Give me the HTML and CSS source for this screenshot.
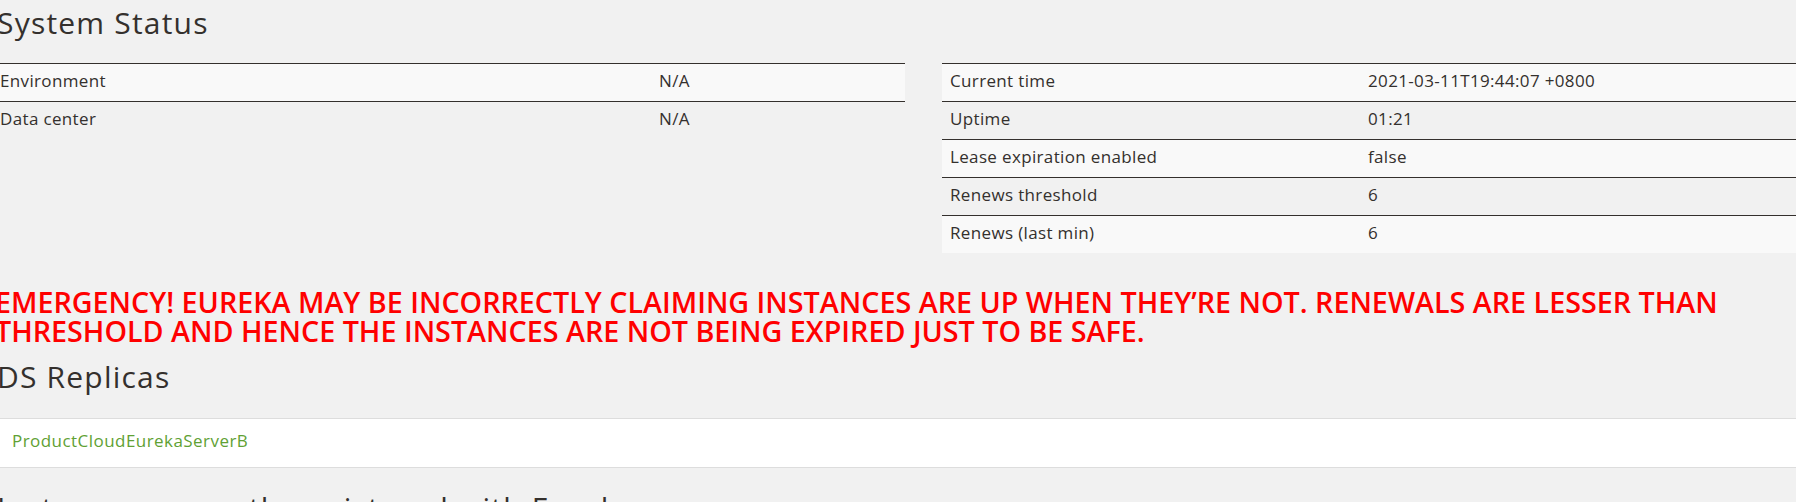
FILE: index.html
```html
<!DOCTYPE html>
<html>
<head>
<meta charset="utf-8">
<title>Eureka</title>
<link rel="stylesheet" href="styles.css">
</head>
<body>
<div class="page">
  <h1 class="title first">System Status</h1>
  <div class="status-row">
    <table class="status left">
      <tr><td class="key">Environment</td><td>N/A</td></tr>
      <tr><td class="key">Data center</td><td>N/A</td></tr>
    </table>
    <table class="status right">
      <tr><td class="key">Current time</td><td>2021-03-11T19:44:07 +0800</td></tr>
      <tr><td class="key">Uptime</td><td>01:21</td></tr>
      <tr><td class="key">Lease expiration enabled</td><td>false</td></tr>
      <tr><td class="key">Renews threshold</td><td>6</td></tr>
      <tr><td class="key">Renews (last min)</td><td>6</td></tr>
    </table>
  </div>
  <h4 class="emergency">EMERGENCY! EUREKA MAY BE INCORRECTLY CLAIMING INSTANCES ARE UP WHEN THEY’RE NOT. RENEWALS ARE LESSER THAN THRESHOLD AND HENCE THE INSTANCES ARE NOT BEING EXPIRED JUST TO BE SAFE.</h4>
  <h1 class="title replicas-title">DS Replicas</h1>
  <ul class="list-group">
    <li class="list-group-item"><a href="#">ProductCloudEurekaServerB</a></li>
  </ul>
  <h1 class="title instances-title">Instances currently registered with Eureka</h1>
</div>
</body>
</html>
```
FILE: styles.css
```css
html, body {
  margin: 0;
  padding: 0;
  background: #f1f1f1;
  overflow: hidden;
}
body {
  font-family: "Open Sans", "Liberation Sans", sans-serif;
  color: #34302d;
}
.page {
  width: 1863px;
  margin-left: -8px;
}
.title {
  margin: 0;
  padding-left: 5px;
  font-family: "Open Sans", "Liberation Sans", sans-serif;
  font-weight: 500;
  font-size: 30px;
  line-height: 36px;
  letter-spacing: 1.2px;
  color: #34302d;
}
.title.first {
  margin-top: 5px;
}
.status-row {
  margin-top: 22px;
  display: grid;
  grid-template-columns: 913px 913px;
  column-gap: 37px;
  align-items: start;
}
.status {
  border-collapse: collapse;
  width: 100%;
  font-size: 17px;
  line-height: 20px;
  letter-spacing: 0.35px;
}
.status td {
  border-top: 1px solid #34302d;
  padding: 7px 7px 10px 8px;
  white-space: nowrap;
}
.status tr:nth-child(odd) td {
  background: #f9f9f9;
}
.status.left .key {
  width: 644px;
}
.status.right .key {
  width: 403px;
}
.emergency {
  margin: 35px 0 0 0;
  padding-left: 3px;
  font-size: 28.7px;
  line-height: 28.5px;
  font-weight: 600;
  color: #ff0000;
}
.replicas-title {
  margin-top: 14px;
}
.list-group {
  list-style: none;
  margin: 23px 0 0 0;
  padding: 0;
}
.list-group-item {
  background: #ffffff;
  border-top: 1px solid #dddddd;
  border-bottom: 1px solid #dddddd;
  padding: 12px 20px 16px 20px;
  font-size: 17px;
  line-height: 20px;
  letter-spacing: 0.45px;
}
.list-group-item a {
  color: #5fa134;
  text-decoration: none;
}
.instances-title {
  margin-top: 22px;
}
```
